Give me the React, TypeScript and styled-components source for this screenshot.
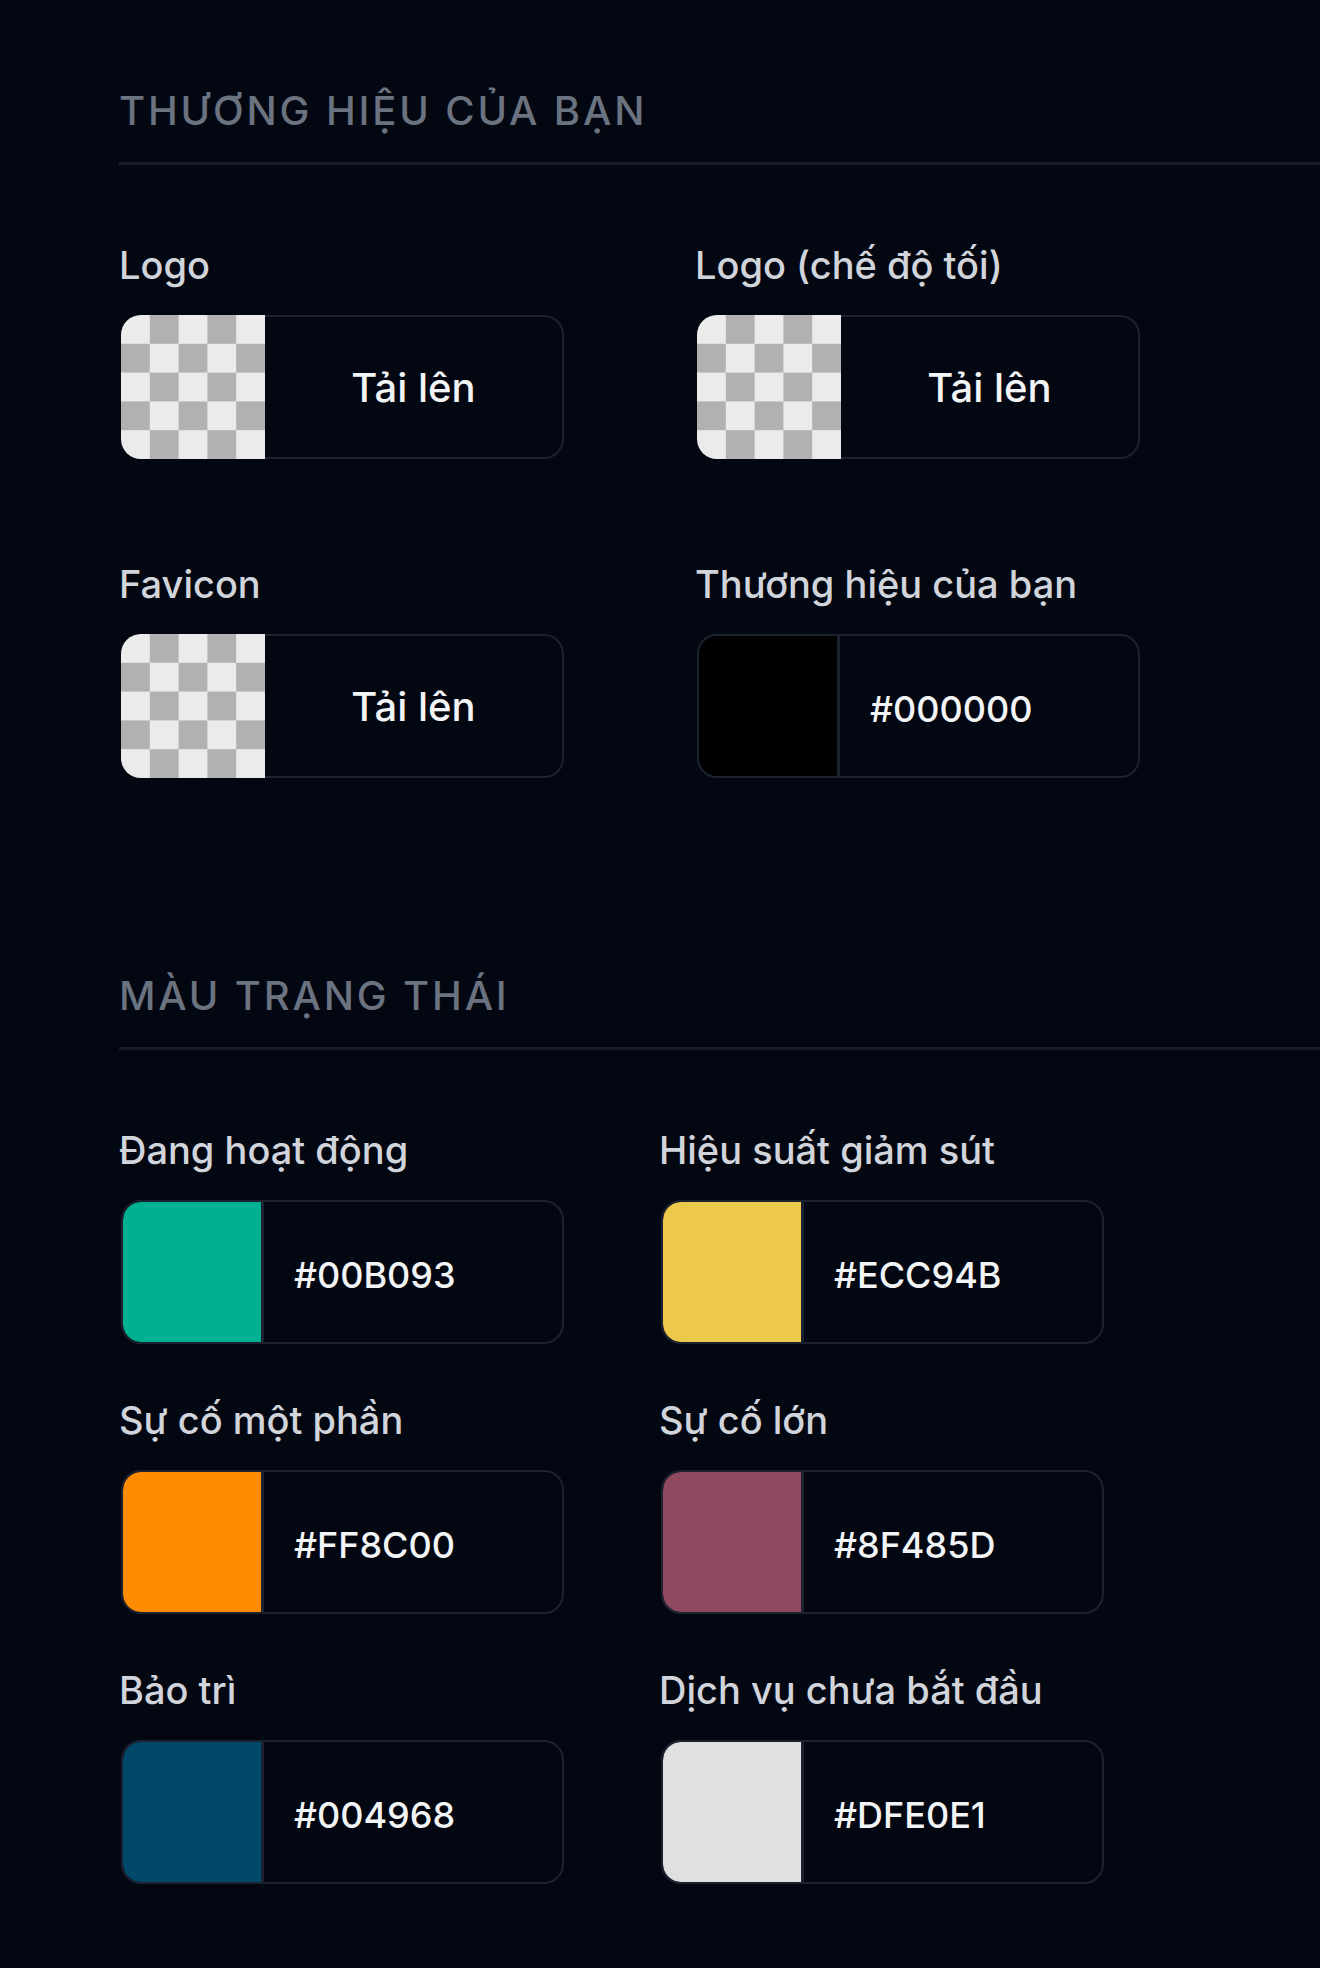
import React from "react";
import styled, { createGlobalStyle } from "styled-components";

const GlobalStyle = createGlobalStyle`
  html, body {
    margin: 0;
    padding: 0;
    background: #030712;
  }
  body {
    font-family: Inter, "Noto Sans", "Liberation Sans", sans-serif;
    -webkit-font-smoothing: antialiased;
  }
  * { box-sizing: border-box; }
`;

const Page = styled.main`
  min-height: 1968px;
  background: #030712;
  padding: 87px 0 80px 119px;
  display: flex;
  flex-direction: column;
`;

const Section = styled.section<{ $first?: boolean }>`
  display: flex;
  flex-direction: column;
  margin-top: ${(p) => (p.$first ? "0" : "194px")};
`;

const SectionHeader = styled.header`
  padding-bottom: 27px;
  border-bottom: 3px solid #171c29;
`;

const SectionTitle = styled.h2`
  margin: 0;
  font-size: 40px;
  line-height: 48px;
  font-weight: 500;
  letter-spacing: 2.85px;
  text-transform: uppercase;
  color: #6b7280;
`;

const FieldGrid = styled.div<{ $col: number; $rowGap: number }>`
  display: grid;
  grid-template-columns: ${(p) => `${p.$col}px ${p.$col}px`};
  row-gap: ${(p) => p.$rowGap}px;
  margin-top: 78px;
  padding-left: 2px;
`;

const Field = styled.div`
  display: flex;
  flex-direction: column;
`;

const Label = styled.label`
  font-size: 38px;
  line-height: 44px;
  font-weight: 500;
  color: #d1d5db;
  margin-bottom: 28px;
  margin-left: -2px;
  white-space: nowrap;
`;

const UploadBox = styled.div`
  display: flex;
  width: 443px;
  height: 144px;
`;

/* transparent-image preview: 5 x 5 checkerboard */
const Checker = styled.div`
  width: 144px;
  height: 144px;
  flex: none;
  border-radius: 20px 0 0 20px;
  background: repeating-conic-gradient(#b1b1b1 0 25%, #ebebeb 0 50%) 0 0 /
    57.6px 57.6px;
`;

const UploadButton = styled.button`
  flex: 1;
  height: 100%;
  background: transparent;
  border: 2px solid #1c2230;
  border-left: none;
  border-radius: 0 20px 20px 0;
  font-family: inherit;
  font-size: 40px;
  font-weight: 500;
  color: #f3f4f6;
  cursor: pointer;
  padding: 1px 0 0;
`;

const ColorBox = styled.div`
  display: flex;
  align-items: stretch;
  width: 443px;
  height: 144px;
  border: 2px solid #1c2230;
  border-radius: 20px;
  overflow: hidden;
`;

const Swatch = styled.div<{ $color: string }>`
  width: 141px;
  flex: none;
  background: ${(p) => p.$color};
  border-right: 3px solid #1c2230;
  border-radius: 18px 0 0 18px;
`;

const HexValue = styled.div`
  display: flex;
  align-items: center;
  padding: 6px 0 0 30px;
  font-size: 36px;
  font-weight: 500;
  color: #f3f4f6;
`;

type BrandField =
  | { kind: "upload"; label: string }
  | { kind: "color"; label: string; value: string };

const brandFields: BrandField[] = [
  { kind: "upload", label: "Logo" },
  { kind: "upload", label: "Logo (chế độ tối)" },
  { kind: "upload", label: "Favicon" },
  { kind: "color", label: "Thương hiệu của bạn", value: "#000000" },
];

const statusColors = [
  { label: "Đang hoạt động", value: "#00B093" },
  { label: "Hiệu suất giảm sút", value: "#ECC94B" },
  { label: "Sự cố một phần", value: "#FF8C00" },
  { label: "Sự cố lớn", value: "#8F485D" },
  { label: "Bảo trì", value: "#004968" },
  { label: "Dịch vụ chưa bắt đầu", value: "#DFE0E1" },
];

const ColorField = ({ label, value }: { label: string; value: string }) => (
  <Field>
    <Label>{label}</Label>
    <ColorBox>
      <Swatch $color={value} />
      <HexValue>{value}</HexValue>
    </ColorBox>
  </Field>
);

const UploadField = ({ label }: { label: string }) => (
  <Field>
    <Label>{label}</Label>
    <UploadBox>
      <Checker />
      <UploadButton type="button">Tải lên</UploadButton>
    </UploadBox>
  </Field>
);

export default function App() {
  return (
    <>
      <GlobalStyle />
      <Page>
        <Section $first>
          <SectionHeader>
            <SectionTitle>Thương hiệu của bạn</SectionTitle>
          </SectionHeader>
          <FieldGrid $col={576} $rowGap={103}>
            {brandFields.map((f) =>
              f.kind === "upload" ? (
                <UploadField key={f.label} label={f.label} />
              ) : (
                <ColorField key={f.label} label={f.label} value={f.value} />
              )
            )}
          </FieldGrid>
        </Section>

        <Section>
          <SectionHeader>
            <SectionTitle>Màu trạng thái</SectionTitle>
          </SectionHeader>
          <FieldGrid $col={540} $rowGap={54}>
            {statusColors.map((c) => (
              <ColorField key={c.label} label={c.label} value={c.value} />
            ))}
          </FieldGrid>
        </Section>
      </Page>
    </>
  );
}
